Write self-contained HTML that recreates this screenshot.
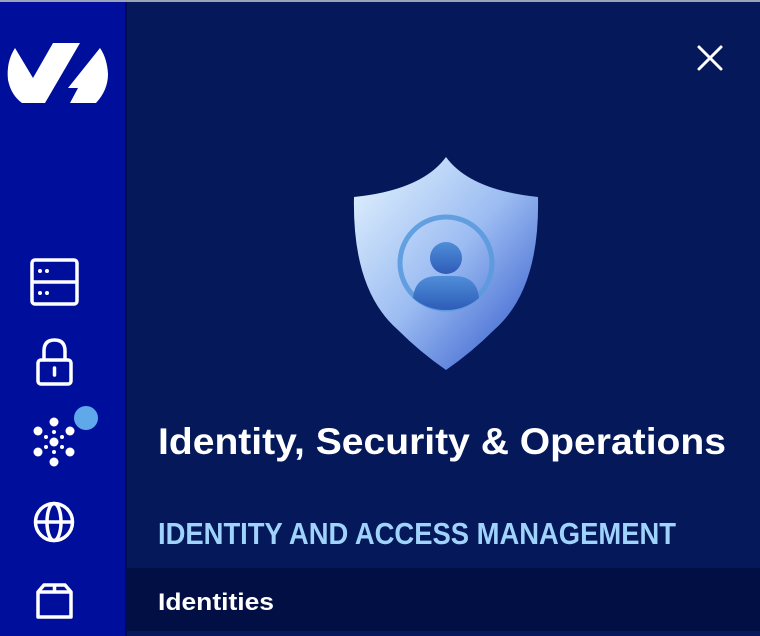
<!DOCTYPE html>
<html><head><meta charset="utf-8"><style>
html,body{margin:0;padding:0;width:760px;height:636px;overflow:hidden;background:#04185a;font-family:"Liberation Sans",sans-serif}
.top{position:absolute;left:0;top:0;width:760px;height:2px;background:#9aa3b8}
.side{position:absolute;left:0;top:2px;width:125px;height:634px;background:#000e9c;border-right:2px solid #020a50}
.row{position:absolute;left:127px;top:568px;width:633px;height:63px;background:#020f45}
svg{position:absolute;left:0;top:0}
</style></head><body>
<div class="top"></div>
<div class="side"></div>
<div class="row"></div>
<svg width="760" height="636" viewBox="0 0 760 636">
<defs>
<linearGradient id="sh" x1="0" y1="0" x2="1" y2="1">
<stop offset="0" stop-color="#e6f6ff"/><stop offset="0.5" stop-color="#9cbcf2"/><stop offset="1" stop-color="#2a52c8"/></linearGradient>
<linearGradient id="pp" x1="0" y1="0" x2="0" y2="1">
<stop offset="0" stop-color="#4f8ed8"/><stop offset="1" stop-color="#2e5cb8"/></linearGradient>
</defs>
<!-- logo -->
<path d="M15,48 Q6,62 8,80 Q11,95 22,103 L45,103 L80,43 L53,43 L33,78 Z" fill="#fff"/>
<path d="M100,48 L68,88 L78,88 L70,103 L96,103 Q108,90 108,74 Q107,58 100,48 Z" fill="#fff"/>
<!-- close -->
<path d="M699,47 L721,69 M721,47 L699,69" stroke="#fff" stroke-width="3" stroke-linecap="round"/>
<!-- server -->
<g fill="none" stroke="#fff" stroke-width="3.5">
<rect x="32" y="260" width="45" height="44" rx="3"/><line x1="32" y1="282" x2="77" y2="282"/>
</g>
<g fill="#fff"><circle cx="40" cy="271" r="2"/><circle cx="47" cy="271" r="2"/><circle cx="40" cy="293" r="2"/><circle cx="47" cy="293" r="2"/></g>
<!-- lock -->
<g fill="none" stroke="#fff" stroke-width="3.5">
<rect x="38" y="360" width="33" height="24" rx="3"/><path d="M44,360 V351 Q44,340 54.5,340 Q65,340 65,351 V360"/>
<line x1="54.5" y1="368" x2="54.5" y2="375" stroke-linecap="round"/>
</g>
<!-- network -->
<g fill="#fff">
<circle cx="54" cy="442" r="4.5"/>
<circle cx="54" cy="422" r="4.5"/><circle cx="54" cy="462" r="4.5"/>
<circle cx="38" cy="431" r="4.5"/><circle cx="70" cy="431" r="4.5"/>
<circle cx="38" cy="452" r="4.5"/><circle cx="70" cy="452" r="4.5"/>
<circle cx="54" cy="432" r="2"/><circle cx="54" cy="452" r="2"/>
<circle cx="46" cy="437" r="2"/><circle cx="62" cy="437" r="2"/>
<circle cx="46" cy="447" r="2"/><circle cx="62" cy="447" r="2"/>
</g>
<circle cx="86" cy="418" r="12" fill="#5fa8ea"/>
<!-- globe -->
<g fill="none" stroke="#fff" stroke-width="3.5">
<circle cx="54" cy="522" r="18.5"/><ellipse cx="54" cy="522" rx="7" ry="18.5"/><line x1="36" y1="522" x2="72" y2="522"/>
</g>
<!-- box -->
<g fill="none" stroke="#fff" stroke-width="3.5" stroke-linejoin="round">
<path d="M38,592 L38,617 L71,617 L71,592 L65,585 L44,585 Z"/><line x1="38" y1="592" x2="71" y2="592"/><line x1="54.5" y1="585" x2="54.5" y2="592"/>
</g>
<!-- shield -->
<path d="M446,157 Q422,190 354,197 Q352,290 398,330 Q420,352 446,370 Q472,352 494,330 Q540,290 538,197 Q470,190 446,157 Z" fill="url(#sh)"/>
<circle cx="446" cy="263" r="46" fill="none" stroke="#5a9ade" stroke-width="5" opacity="0.9"/>
<circle cx="446" cy="258" r="16" fill="url(#pp)"/>
<path d="M413,298 Q415,276 438,276 L454,276 Q477,276 479,298 Q465,310 446,310 Q427,310 413,298 Z" fill="url(#pp)"/>
<!-- text -->
<text x="158" y="454" fill="#fff" font-size="37" font-weight="bold" textLength="568" lengthAdjust="spacingAndGlyphs">Identity, Security &amp; Operations</text>
<text x="158" y="544" fill="#9fd3fb" font-size="31" font-weight="bold" textLength="518" lengthAdjust="spacingAndGlyphs">IDENTITY AND ACCESS MANAGEMENT</text>
<text x="158" y="610" fill="#fff" font-size="24" font-weight="bold" textLength="116" lengthAdjust="spacingAndGlyphs">Identities</text>
</svg>
</body></html>
